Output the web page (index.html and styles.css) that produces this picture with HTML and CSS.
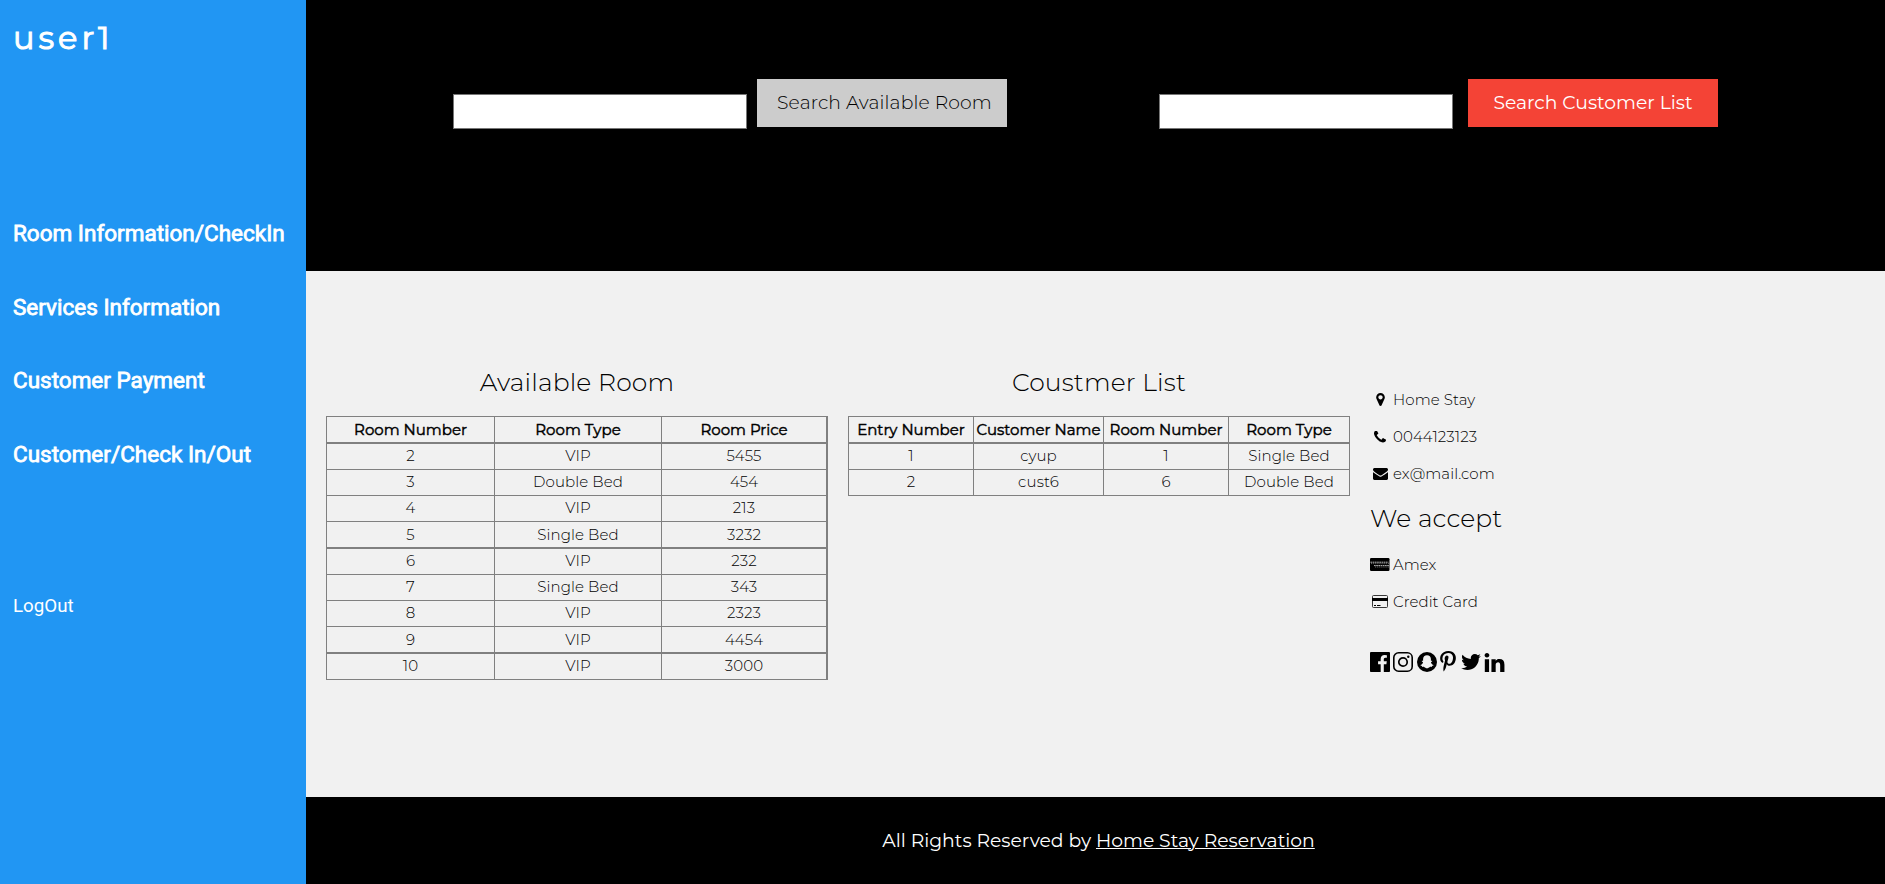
FILE: index.html
```
<!DOCTYPE html>
<html lang="en">
<head>
<meta charset="utf-8">
<title>Home Stay Reservation</title>
<link rel="stylesheet" href="styles.css">
</head>
<body>
<div class="page">
  <aside class="sidebar">
    <h1 class="user">user1</h1>
    <nav class="nav">
      <a class="nav-link">Room Information/CheckIn</a>
      <a class="nav-link">Services Information</a>
      <a class="nav-link">Customer Payment</a>
      <a class="nav-link">Customer/Check In/Out</a>
    </nav>
    <a class="logout">LogOut</a>
  </aside>
  <main class="main">
    <header class="search">
      <form class="search-form search-rooms">
        <input class="search-input" type="text">
        <button class="btn btn-grey" type="button">Search Available Room</button>
      </form>
      <form class="search-form search-customers">
        <input class="search-input" type="text">
        <button class="btn btn-red" type="button">Search Customer List</button>
      </form>
    </header>
    <section class="content">
      <div class="panel">
        <h2 class="heading">Available Room</h2>
        <table class="table rooms">
          <tr class="head"><th>Room Number</th><th>Room Type</th><th>Room Price</th></tr>
          <tr><td>2</td><td>VIP</td><td>5455</td></tr>
          <tr><td>3</td><td>Double Bed</td><td>454</td></tr>
          <tr><td>4</td><td>VIP</td><td>213</td></tr>
          <tr class="thick"><td>5</td><td>Single Bed</td><td>3232</td></tr>
          <tr><td>6</td><td>VIP</td><td>232</td></tr>
          <tr><td>7</td><td>Single Bed</td><td>343</td></tr>
          <tr><td>8</td><td>VIP</td><td>2323</td></tr>
          <tr class="thick"><td>9</td><td>VIP</td><td>4454</td></tr>
          <tr><td>10</td><td>VIP</td><td>3000</td></tr>
        </table>
      </div>
      <div class="panel">
        <h2 class="heading">Coustmer List</h2>
        <table class="table customers">
          <tr class="head"><th>Entry Number</th><th>Customer Name</th><th>Room Number</th><th>Room Type</th></tr>
          <tr><td>1</td><td>cyup</td><td>1</td><td>Single Bed</td></tr>
          <tr><td>2</td><td>cust6</td><td>6</td><td>Double Bed</td></tr>
        </table>
      </div>
      <div class="info">
        <p class="line"><span class="ico"><svg width="9" height="13" viewBox="384 128 1024 1536"><path d="M1152 640q0-106-75-181t-181-75-181 75-75 181 75 181 181 75 181-75 75-181zm256 0q0 109-33 179l-364 774q-16 33-47.500 52t-67.500 19-67.500-19-46.500-52l-365-774q-33-70-33-179 0-212 150-362t362-150 362 150 150 362z"/></svg></span>Home Stay</p>
        <p class="line"><span class="ico"><svg width="12" height="12" viewBox="192 192 1408 1408"><path d="M1600 1240q0 27-10 70.500t-21 68.500q-21 50-122 106-94 51-186 51-27 0-53-3.500t-57.500-12.500-47-14.500-55.500-20.500-49-18q-98-35-175-83-127-79-264-216t-216-264q-48-77-83-175-3-9-18-49t-20.500-55.500-14.500-47-12.500-57.500-3.500-53q0-92 51-186 56-101 106-122 25-11 68.500-21t70.500-10q14 0 21 3 18 6 53 76 11 19 30 54t35 63.500 31 53.500q3 4 17.500 25t21.500 35.500 7 28.500q0 20-28.500 50t-62 55-62 53-28.500 46q0 9 5 22.500t8.500 20.500 14 24 11.500 19q76 137 174 235t235 174q2 1 19 11.500t24 14 20.500 8.500 22.500 5q18 0 46-28.500t53-62 55-62 50-28.500q14 0 28.500 7t35.500 21.500 25 17.500q25 15 53.500 31t63.500 35 54 30q70 35 76 53 3 7 3 21z"/></svg></span>0044123123</p>
        <p class="line"><span class="ico"><svg width="15" height="12" viewBox="0 256 1792 1408"><path d="M1792 710v794q0 66-47 113t-113 47h-1472q-66 0-113-47t-47-113v-794q44 49 101 87 362 246 497 345 57 42 92.500 65.500t94.500 48 110 24.500h2q51 0 110-24.500t94.500-48 92.500-65.500q170-123 498-345 57-39 100-87zm0-294q0 79-49 151t-122 123q-376 261-468 325-10 7-42.500 31t-54 38.500-52 32.500-57.500 27-50 9h-2q-23 0-50-9t-57.500-27-52-32.500-54-38.500-42.500-31q-91-64-262-182.500t-205-142.500q-62-42-117-115.500t-55-136.500q0-78 41.500-130t118.500-52h1472q65 0 112.500 47t47.500 113z"/></svg></span>ex@mail.com</p>
        <h2 class="accept">We accept</h2>
        <p class="line"><span class="ico"><svg width="20" height="13" viewBox="0 0 20 13"><rect width="19.500" height="13" rx="1.200"/><path d="M.5 4.200h18M4 7.600h15" stroke="#bbb" stroke-width="1" stroke-dasharray="1.700 .5" fill="none"/><path d="M1 5.600h18M5 9h14" stroke="#777" stroke-width=".9" stroke-dasharray="1.200 .9" fill="none"/></svg></span>Amex</p>
        <p class="line"><span class="ico"><svg width="16" height="13" viewBox="0 0 16 13"><rect x=".5" y=".5" width="15" height="12" rx="1" fill="none" stroke="#222" stroke-width=".9"/><path d="M0 3h16v3H0zM2 10h2v1H2zM5 10h3.500v1H5z"/></svg></span>Credit Card</p>
        <div class="social">
          <svg width="20" height="20" viewBox="128 128 1536 1536"><path d="M1579 128q35 0 60 25t25 60v1366q0 35-25 60t-60 25h-391v-595h199l30-232h-229v-148q0-56 23.500-84t91.500-28l122-1v-207q-63-9-178-9-136 0-217.500 80t-81.500 226v171h-200v232h200v595h-735q-35 0-60-25t-25-60v-1366q0-35 25-60t60-25h1366z"/></svg>
          <svg width="20" height="20" viewBox="0 0 20 20"><rect x=".8" y=".8" width="18.400" height="18.400" rx="4.800" fill="none" stroke="#000" stroke-width="1.600"/><circle cx="10" cy="10" r="4.200" fill="none" stroke="#000" stroke-width="1.700"/><circle cx="15.300" cy="4.700" r="1.200"/></svg>
          <svg width="20" height="20" viewBox="0 0 20 20"><circle cx="10" cy="10" r="10"/><path fill="#f1f1f1" d="M10 3.200c2.400 0 3.900 1.600 3.900 3.900v1.700c.5.200 1.100-.2 1.300.2.200.6-1.200.8-1.200 1.400.2 1.200 1.300 2.200 2.600 2.600.3.500-.8.800-1.500 1-.2.300-.1.800-.5.900-.6 0-1.200-.2-1.800 0-.9.500-1.500 1.300-2.800 1.300s-1.900-.8-2.800-1.300c-.6-.2-1.200 0-1.800 0-.4-.1-.3-.6-.5-.9-.7-.2-1.800-.5-1.500-1 1.300-.4 2.400-1.400 2.600-2.600 0-.6-1.400-.8-1.200-1.400.2-.4.8 0 1.300-.2V7.100c0-2.300 1.500-3.900 3.900-3.900z"/></svg>
          <svg class="pin" width="16" height="22" viewBox="256 0 1280 1792"><path d="M256 597q0-108 37.500-203.500t103.500-166.500 152-123 185-78 202-26q158 0 294 66.500t221 193.500 85 287q0 96-19 188t-60 177-100 149.500-145 103-189 38.500q-68 0-135-32t-96-88q-10 39-28 112.500t-23.500 95-20.500 71-26 71-32 62.500-46 77.500-62 86.500l-14 5-9-10q-15-157-15-188 0-92 21.500-206.500t66.500-287.500 52-203q-32-65-32-169 0-83 52-156t132-73q61 0 95 40.500t34 102.500q0 66-44 191t-44 187q0 63 45 104.500t109 41.500q55 0 102-25t78.500-68 56-95 38-110.500 20-111 6.500-99.500q0-173-109.500-269.500t-285.500-96.500q-200 0-334 129.500t-134 328.500q0 44 12.500 85t27 65 27 45.500 12.500 30.500q0 28-15 73t-37 45q-2 0-17-3-51-15-90.500-56t-61-94.500-32.500-108-11-106.500z"/></svg>
          <svg class="bird" width="20" height="16" viewBox="108 256 1576 1280"><path d="M1684 408q-67 98-162 167 1 14 1 42 0 130-38 259.500t-115.500 248.500-184.500 210.500-258 146-323 54.500q-271 0-496-145 35 4 78 4 225 0 401-138-105-2-188-64.500t-114-159.500q33 5 61 5 43 0 85-11-112-23-185.500-111.500t-73.500-205.500v-4q68 38 146 41-66-44-105-115t-39-154q0-88 44-163 121 149 294.500 238.500t371.500 99.500q-8-38-8-74 0-134 94.500-228.500t228.500-94.500q140 0 236 102 109-21 205-78-37 115-142 178 93-10 186-50z"/></svg>
          <svg width="21" height="19" viewBox="128 148 1536 1468"><path d="M477 625v991h-330v-991h330zm21-306q1 73-50.500 122t-135.500 49h-2q-82 0-132-49t-50-122q0-74 51.500-122.500t134.500-48.500 133 48.500 51 122.500zm1166 729v568h-329v-530q0-105-40.500-164.500t-126.500-59.500q-63 0-105.500 34.500t-63.500 85.500q-11 30-11 81v553h-329q2-399 2-647t-1-296l-1-48h329v144h-2q20-32 41-56t56.500-52 87-43.500 114.500-15.500q171 0 275 113.500t104 332.500z"/></svg>
        </div>
      </div>
    </section>
    <footer class="footer"><p>All Rights Reserved by <a class="brand">Home Stay Reservation</a></p></footer>
  </main>
</div>
</body>
</html>
```
FILE: styles.css
```
* { box-sizing: border-box; }
body { margin: 0; font-family: Montserrat, Inter, "Liberation Sans", sans-serif; font-size: 15px; color: #000; }
h1, h2, p { margin: 0; }
.page { display: flex; height: 884px; overflow: hidden; }

.sidebar { width: 306px; flex: none; background: #2196f3; color: #fff; font-family: Roboto, sans-serif; padding-left: 13px; display: flex; flex-direction: column; }
.user { margin-top: 17px; height: 42px; font: 400 32px/41px Montserrat, Inter, sans-serif; letter-spacing: 4px; -webkit-text-stroke: 1px #fff; }
.nav { margin-top: 138px; display: flex; flex-direction: column; }
.nav-link { height: 73.67px; line-height: 73.67px; font-size: 22.500px; white-space: nowrap; -webkit-text-stroke: .8px #fff; }
.logout { margin-top: 99px; line-height: 30px; font-size: 18.750px; }

.main { flex: 1; display: flex; flex-direction: column; }
.search { height: 271px; background: #000; display: flex; padding: 79px 0 0 147px; }
.search-form { display: flex; align-items: flex-start; }
.search-rooms { width: 706px; gap: 10px; }
.search-customers { gap: 15px; }
.search-input { width: 294px; height: 35px; margin: 15px 0 0; padding: 0; background: #fff; border: 1px solid #767676; }
.btn { width: 250px; height: 48px; border: 0; padding: 0; font: 400 18.750px/48px Montserrat, Inter, sans-serif; white-space: nowrap; }
.btn-grey { background: #ccc; color: #000; padding-left: 5px; font-weight: 300; letter-spacing: .12px; }
.btn-red { background: #f44336; color: #fff; }

.content { height: 526px; background: #f1f1f1; display: flex; gap: 20px; padding: 96px 0 0 20px; }
.panel { width: 502px; }
.heading, .accept { font-weight: 300; font-size: 25px; letter-spacing: .15px; line-height: 30px; }
.heading { text-align: center; height: 49px; }
.table { width: 502px; table-layout: fixed; border-collapse: separate; border-spacing: 0; border-left: 1px solid #808080; font-size: 15px; }
.table td, .table th { padding: 0; border: 0 solid #808080; text-align: center; white-space: nowrap; vertical-align: top; }
.table td { height: 26px; line-height: 24px; border-width: 0 1px 1px 0; font-weight: 300; letter-spacing: .1px; }
.table th { font-weight: 400; height: 28px; line-height: 25px; border-width: 1px 1px 2px 0; -webkit-text-stroke: .45px #000; }
.table .thick td { height: 27px; padding-top: 1px; border-bottom-width: 2px; }
.rooms td:last-child, .rooms th:last-child { border-right-width: 2px; }
.rooms th:nth-child(1) { width: 168px; }
.rooms th:nth-child(2) { width: 167px; }
.customers th:nth-child(1) { width: 125px; }
.customers th:nth-child(2) { width: 130px; }
.customers th:nth-child(3) { width: 125px; }

.info { padding-top: 13.600px; font-weight: 300; letter-spacing: .1px; }
.line { display: flex; align-items: center; height: 37.300px; }
.ico { width: 20px; margin-right: 3px; display: flex; justify-content: center; }
.accept { height: 53px; line-height: 53px; }
.social { display: flex; align-items: center; gap: 3.400px; height: 24px; margin-top: 30px; }
.pin { margin-top: -1px; }
.bird { margin-left: 1px; }

.footer { height: 87px; background: #000; color: #fff; display: flex; justify-content: center; align-items: center; font-size: 18.750px; padding-left: 6px; }
.brand { text-decoration: underline; text-decoration-thickness: 1px; text-underline-offset: 1px; }
```
